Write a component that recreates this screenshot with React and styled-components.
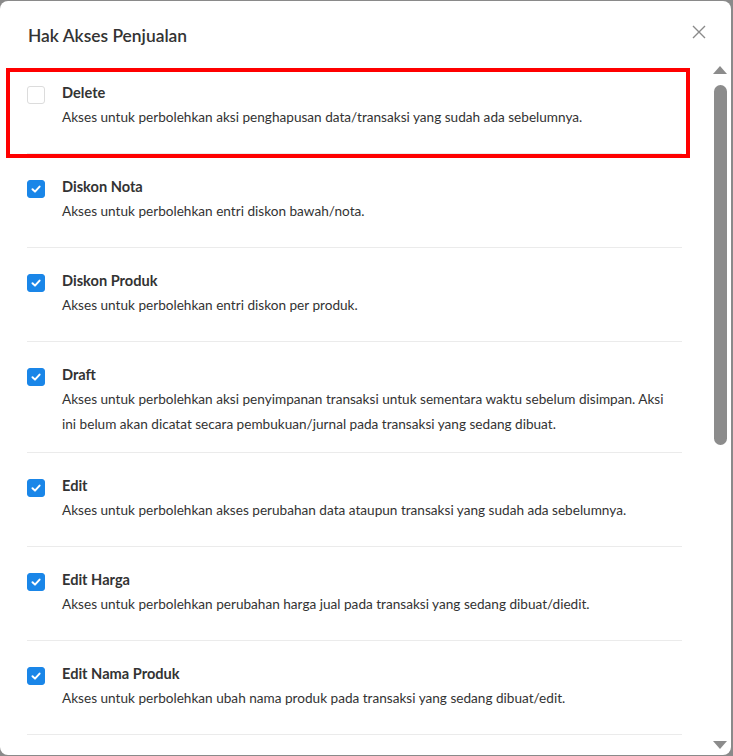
import React from "react";
import styled, { createGlobalStyle } from "styled-components";

const GlobalStyle = createGlobalStyle`
  html, body {
    margin: 0;
    padding: 0;
    background: #8a8a8a;
    font-family: Lato, "Noto Sans", sans-serif;
    color: #333;
  }
`;

const Modal = styled.div`
  width: 731px;
  height: 754px;
  margin-top: 1px;
  background: #fff;
  border-radius: 8px;
  overflow: hidden;
  display: flex;
  flex-direction: column;
`;

const Header = styled.div`
  height: 59px;
  flex-shrink: 0;
  display: flex;
  justify-content: space-between;
  align-items: flex-start;
  padding: 24px 24px 0 28px;
  box-sizing: border-box;
`;

const Title = styled.h2`
  margin: 0;
  font-size: 17.4px;
  font-weight: 600;
  line-height: 22px;
  color: #333;
`;

const CloseButton = styled.button`
  border: none;
  background: none;
  padding: 0;
  margin-top: -1px;
  width: 16px;
  height: 16px;
  display: flex;
  align-items: center;
  justify-content: center;
  cursor: pointer;
`;

const Body = styled.div`
  flex: 1;
  display: flex;
  min-height: 0;
`;

const List = styled.div`
  flex: 1;
  padding: 0 31px 0 27px;
  overflow: hidden;
`;

const Item = styled.label`
  position: relative;
  display: flex;
  gap: 17px;
  min-height: 94px;
  box-sizing: border-box;
  padding: 26px 0 15px;
  border-bottom: 1px solid #ebebeb;
`;

const Box = styled.span`
  flex-shrink: 0;
  width: 18px;
  height: 18px;
  box-sizing: border-box;
  border-radius: 3px;
  display: flex;
  align-items: center;
  justify-content: center;
  background: ${(p) => (p.$checked ? "#1a86e8" : "#fff")};
  border: 1px solid ${(p) => (p.$checked ? "#1a86e8" : "#dcdcdc")};
`;

const Text = styled.div`
  display: flex;
  flex-direction: column;
  gap: 5px;
`;

const Name = styled.div`
  font-size: 14.6px;
  font-weight: 700;
  line-height: 14px;
  color: #333;
`;

const Desc = styled.div`
  max-width: 610px;
  font-size: 13.6px;
  line-height: 25px;
  color: #333;
`;

const Highlight = styled.div`
  position: absolute;
  left: -21px;
  right: -8px;
  top: 8px;
  bottom: -5px;
  border: 4px solid #ff0000;
  pointer-events: none;
`;

const Scrollbar = styled.div`
  width: 14px;
  margin-right: 4px;
  display: flex;
  flex-direction: column;
  align-items: center;
  padding: 6px 0 6px;
`;

const Arrow = styled.div`
  width: 0;
  height: 0;
  border-left: 7px solid transparent;
  border-right: 7px solid transparent;
  ${(p) =>
    p.$down
      ? "border-top: 8px solid #8c8c8c;"
      : "border-bottom: 8px solid #8c8c8c;"}
`;

const Track = styled.div`
  flex: 1;
  width: 100%;
  padding: 11px 0;
`;

const Thumb = styled.div`
  width: 13px;
  margin: 0 auto;
  height: 360px;
  border-radius: 7px;
  background: #8c8c8c;
`;

const items = [
  {
    name: "Delete",
    desc: "Akses untuk perbolehkan aksi penghapusan data/transaksi yang sudah ada sebelumnya.",
    checked: false,
    marked: true,
  },
  { name: "Diskon Nota", desc: "Akses untuk perbolehkan entri diskon bawah/nota.", checked: true },
  { name: "Diskon Produk", desc: "Akses untuk perbolehkan entri diskon per produk.", checked: true },
  {
    name: "Draft",
    desc: "Akses untuk perbolehkan aksi penyimpanan transaksi untuk sementara waktu sebelum disimpan. Aksi ini belum akan dicatat secara pembukuan/jurnal pada transaksi yang sedang dibuat.",
    checked: true,
  },
  {
    name: "Edit",
    desc: "Akses untuk perbolehkan akses perubahan data ataupun transaksi yang sudah ada sebelumnya.",
    checked: true,
  },
  {
    name: "Edit Harga",
    desc: "Akses untuk perbolehkan perubahan harga jual pada transaksi yang sedang dibuat/diedit.",
    checked: true,
  },
  {
    name: "Edit Nama Produk",
    desc: "Akses untuk perbolehkan ubah nama produk pada transaksi yang sedang dibuat/edit.",
    checked: true,
  },
];

function Check() {
  return (
    <svg width="12" height="12" viewBox="0 0 12 12" fill="none">
      <path d="M2.5 6.2 L5 8.6 L9.6 3.6" stroke="#fff" strokeWidth="2" strokeLinecap="round" strokeLinejoin="round" />
    </svg>
  );
}

export default function App() {
  return (
    <>
      <GlobalStyle />
      <Modal>
        <Header>
          <Title>Hak Akses Penjualan</Title>
          <CloseButton aria-label="Tutup">
            <svg width="14" height="14" viewBox="0 0 14 14">
              <path d="M1 1 L13 13 M13 1 L1 13" stroke="#8a8a8a" strokeWidth="1.4" />
            </svg>
          </CloseButton>
        </Header>
        <Body>
          <List>
            {items.map((it) => (
              <Item key={it.name}>
                <Box $checked={it.checked}>{it.checked && <Check />}</Box>
                <Text>
                  <Name>{it.name}</Name>
                  <Desc>{it.desc}</Desc>
                </Text>
                {it.marked && <Highlight />}
              </Item>
            ))}
          </List>
          <Scrollbar>
            <Arrow />
            <Track>
              <Thumb />
            </Track>
            <Arrow $down />
          </Scrollbar>
        </Body>
      </Modal>
    </>
  );
}
